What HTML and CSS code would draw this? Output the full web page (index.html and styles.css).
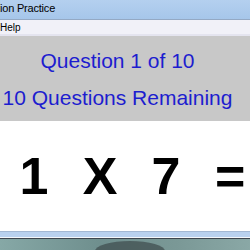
FILE: index.html
```html
<!DOCTYPE html>
<html lang="en">
<head>
    <meta charset="UTF-8">
    <meta name="viewport" content="width=device-width, initial-scale=1.0">
    <title>Multiplication Practice</title>
    <link rel="stylesheet" href="styles.css">
</head>
<body>
    <div class="window">
        <div class="titlebar"><span class="title">ion Practice</span></div>
        <div class="menubar"><span class="menuitem">Help</span></div>

        <div class="status">
            <div class="status_lines">
                <div class="line">Question 1 of 10</div>
                <div class="line">10 Questions Remaining</div>
            </div>
        </div>

        <div class="problem">
            <div class="term">1</div>
            <div class="term">X</div>
            <div class="term">7</div>
            <div class="term last">=</div>
        </div>

        <div class="frame_bottom"></div>
    </div>
    <div class="desktop">
        <div class="blob"></div>
    </div>
</body>
</html>
```

FILE: styles.css
```css
html, body{
  margin:0;
  padding:0;
}
body{
  width:250px;
  height:250px;
  overflow:hidden;
  background:#7d9c9a;
  font-family:"Liberation Sans", Arial, sans-serif;
}
.window{
  width:250px;
}
.titlebar{
  height:19px;
  background:linear-gradient(#b4d0ef, #a6c6ea);
  border-bottom:1px solid #94a9c4;
  display:flex;
  align-items:center;
}
.titlebar .title{
  font-size:11px;
  color:#000;
  margin-top:-3px;
  letter-spacing:-0.2px;
}
.menubar{
  height:14px;
  background:#f1f1f8;
  border-bottom:2px solid #e4e4ef;
  display:flex;
  align-items:center;
}
.menubar .menuitem{
  font-size:10px;
  color:#000;
  margin-top:1px;
}
.status{
  background:#c8c8c8;
  height:85px;
  box-sizing:border-box;
  padding-top:6px;
}
.status_lines{
  width:235px;
  text-align:center;
}
.status .line{
  font-size:21px;
  line-height:37px;
  color:#1d1dcf;
  white-space:nowrap;
}
.problem{
  background:#fff;
  height:110px;
  box-sizing:border-box;
  padding-top:25px;
  padding-left:1px;
  display:grid;
  grid-template-columns:66px 66px 66px 1fr;
  align-content:start;
}
.problem .term{
  font-size:52px;
  font-weight:bold;
  line-height:60px;
  text-align:center;
  color:#000;
}
.problem .last{
  text-align:left;
  padding-left:16px;
}
.frame_bottom{
  height:5px;
  background:#b9d1ee;
  border-top:1px solid #a3b8d3;
  border-bottom:1px solid #f4f7fb;
  box-shadow:0 1px 0 #3e464e;
}
.desktop{
  height:13px;
  margin-top:1px;
  background:linear-gradient(90deg, #86a8a6, #6f8f8e 40%, #7a9896 70%, #8aa8a6);
  position:relative;
}
.desktop .blob{
  position:absolute;
  left:95px;
  top:2px;
  width:70px;
  height:20px;
  border-radius:50%;
  background:#3d4a4c;
  opacity:0.7;
}
```
